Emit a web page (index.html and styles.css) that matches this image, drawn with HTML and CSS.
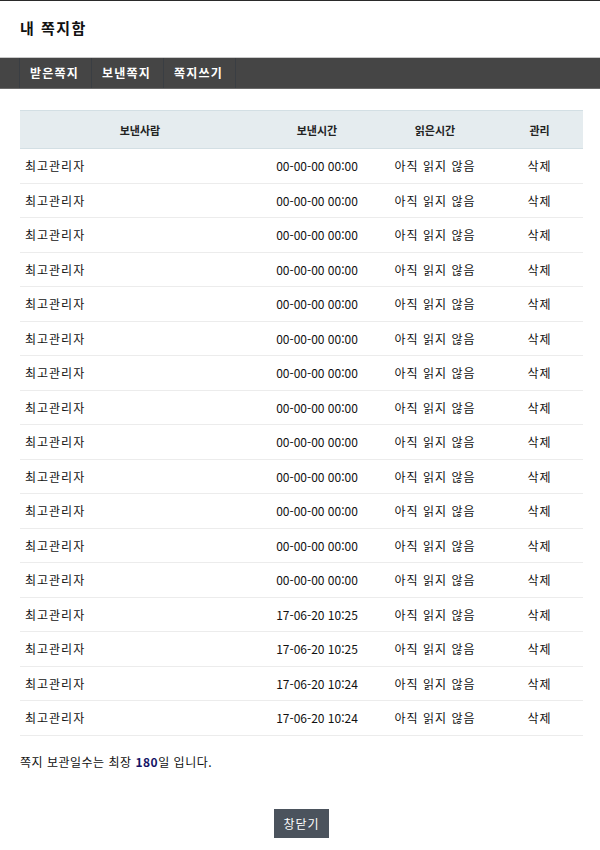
FILE: index.html
```html
<!DOCTYPE html>
<html lang="ko">
<head>
<meta charset="utf-8">
<title>내 쪽지함</title>
<link rel="stylesheet" href="styles.css">
</head>
<body>
<div class="page">
  <h1 class="title">내 쪽지함</h1>
  <nav class="tabs">
    <a class="tab">받은쪽지</a>
    <a class="tab">보낸쪽지</a>
    <a class="tab">쪽지쓰기</a>
  </nav>
  <div class="content">
    <table class="memo">
      <colgroup>
        <col class="c1"><col class="c2"><col class="c3"><col class="c4">
      </colgroup>
      <thead>
        <tr><th>보낸사람</th><th>보낸시간</th><th>읽은시간</th><th>관리</th></tr>
      </thead>
      <tbody>
        <tr><td class="name">최고관리자</td><td class="time">00-00-00 00:00</td><td>아직 읽지 않음</td><td>삭제</td></tr>
        <tr><td class="name">최고관리자</td><td class="time">00-00-00 00:00</td><td>아직 읽지 않음</td><td>삭제</td></tr>
        <tr><td class="name">최고관리자</td><td class="time">00-00-00 00:00</td><td>아직 읽지 않음</td><td>삭제</td></tr>
        <tr><td class="name">최고관리자</td><td class="time">00-00-00 00:00</td><td>아직 읽지 않음</td><td>삭제</td></tr>
        <tr><td class="name">최고관리자</td><td class="time">00-00-00 00:00</td><td>아직 읽지 않음</td><td>삭제</td></tr>
        <tr><td class="name">최고관리자</td><td class="time">00-00-00 00:00</td><td>아직 읽지 않음</td><td>삭제</td></tr>
        <tr><td class="name">최고관리자</td><td class="time">00-00-00 00:00</td><td>아직 읽지 않음</td><td>삭제</td></tr>
        <tr><td class="name">최고관리자</td><td class="time">00-00-00 00:00</td><td>아직 읽지 않음</td><td>삭제</td></tr>
        <tr><td class="name">최고관리자</td><td class="time">00-00-00 00:00</td><td>아직 읽지 않음</td><td>삭제</td></tr>
        <tr><td class="name">최고관리자</td><td class="time">00-00-00 00:00</td><td>아직 읽지 않음</td><td>삭제</td></tr>
        <tr><td class="name">최고관리자</td><td class="time">00-00-00 00:00</td><td>아직 읽지 않음</td><td>삭제</td></tr>
        <tr><td class="name">최고관리자</td><td class="time">00-00-00 00:00</td><td>아직 읽지 않음</td><td>삭제</td></tr>
        <tr><td class="name">최고관리자</td><td class="time">00-00-00 00:00</td><td>아직 읽지 않음</td><td>삭제</td></tr>
        <tr><td class="name">최고관리자</td><td class="time">17-06-20 10:25</td><td>아직 읽지 않음</td><td>삭제</td></tr>
        <tr><td class="name">최고관리자</td><td class="time">17-06-20 10:25</td><td>아직 읽지 않음</td><td>삭제</td></tr>
        <tr><td class="name">최고관리자</td><td class="time">17-06-20 10:24</td><td>아직 읽지 않음</td><td>삭제</td></tr>
        <tr><td class="name">최고관리자</td><td class="time">17-06-20 10:24</td><td>아직 읽지 않음</td><td>삭제</td></tr>
      </tbody>
    </table>
    <p class="notice">쪽지 보관일수는 최장 <strong>180</strong>일 입니다.</p>
    <div class="actions"><button class="close-btn" type="button">창닫기</button></div>
  </div>
</div>
</body>
</html>
```

FILE: styles.css
```css
html, body {
  margin: 0;
  padding: 0;
  background: #fff;
}
body {
  font-family: "Noto Sans CJK KR", "Noto Sans", sans-serif;
  font-size: 12px;
  color: #000;
}
.page {
  border-top: 1px solid #2a2a2a;
}
.title {
  margin: 0;
  height: 56px;
  padding: 0 20px;
  font-size: 15px;
  font-weight: bold;
  line-height: 54px;
  letter-spacing: 1.5px;
  color: #111;
}
.tabs {
  display: flex;
  background: #454545;
  border-top: 1px solid #c9c9c9;
  border-bottom: 1px solid #6a6a6a;
  height: 30px;
  padding-left: 19px;
}
.tab {
  display: block;
  padding: 0 10px;
  width: 51px;
  line-height: 30px;
  font-size: 12px;
  font-weight: bold;
  letter-spacing: 1.2px;
  color: #fff;
  border-left: 1px solid #3a3e43;
  white-space: nowrap;
  overflow: hidden;
}
.tab:last-child {
  border-right: 1px solid #3a3e43;
}
.content {
  padding: 21px 17px 0 20px;
}
.memo {
  width: 563px;
  border-collapse: collapse;
  table-layout: fixed;
}
.c1 { width: 240px; }
.c2 { width: 114px; }
.c3 { width: 122px; }
.c4 { width: 87px; }
.memo th {
  height: 37px;
  padding: 0;
  background: #e5ecef;
  border-top: 1px solid #d3dfe4;
  border-bottom: 1px solid #d3dfe4;
  font-size: 11px;
  font-weight: bold;
  color: #222;
  text-align: center;
}
.memo td {
  height: 33.5px;
  padding: 0;
  border-bottom: 1px solid #ececec;
  text-align: center;
  color: #111;
  letter-spacing: 1px;
  white-space: nowrap;
}
.memo td.time {
  letter-spacing: 0;
}
.memo td.name {
  text-align: left;
  padding-left: 5px;
}
.notice {
  margin: 18px 0 0 0;
  line-height: 16px;
  letter-spacing: 0.5px;
  color: #111;
}
.notice strong {
  color: #141466;
}
.actions {
  display: flex;
  justify-content: center;
  padding-top: 39px;
}
.close-btn {
  width: 55px;
  height: 29px;
  border: 0;
  padding: 0;
  background: #4b535d;
  color: #fff;
  font-family: "Noto Sans CJK KR", "Noto Sans", sans-serif;
  font-size: 12px;
  letter-spacing: 1px;
}
```
